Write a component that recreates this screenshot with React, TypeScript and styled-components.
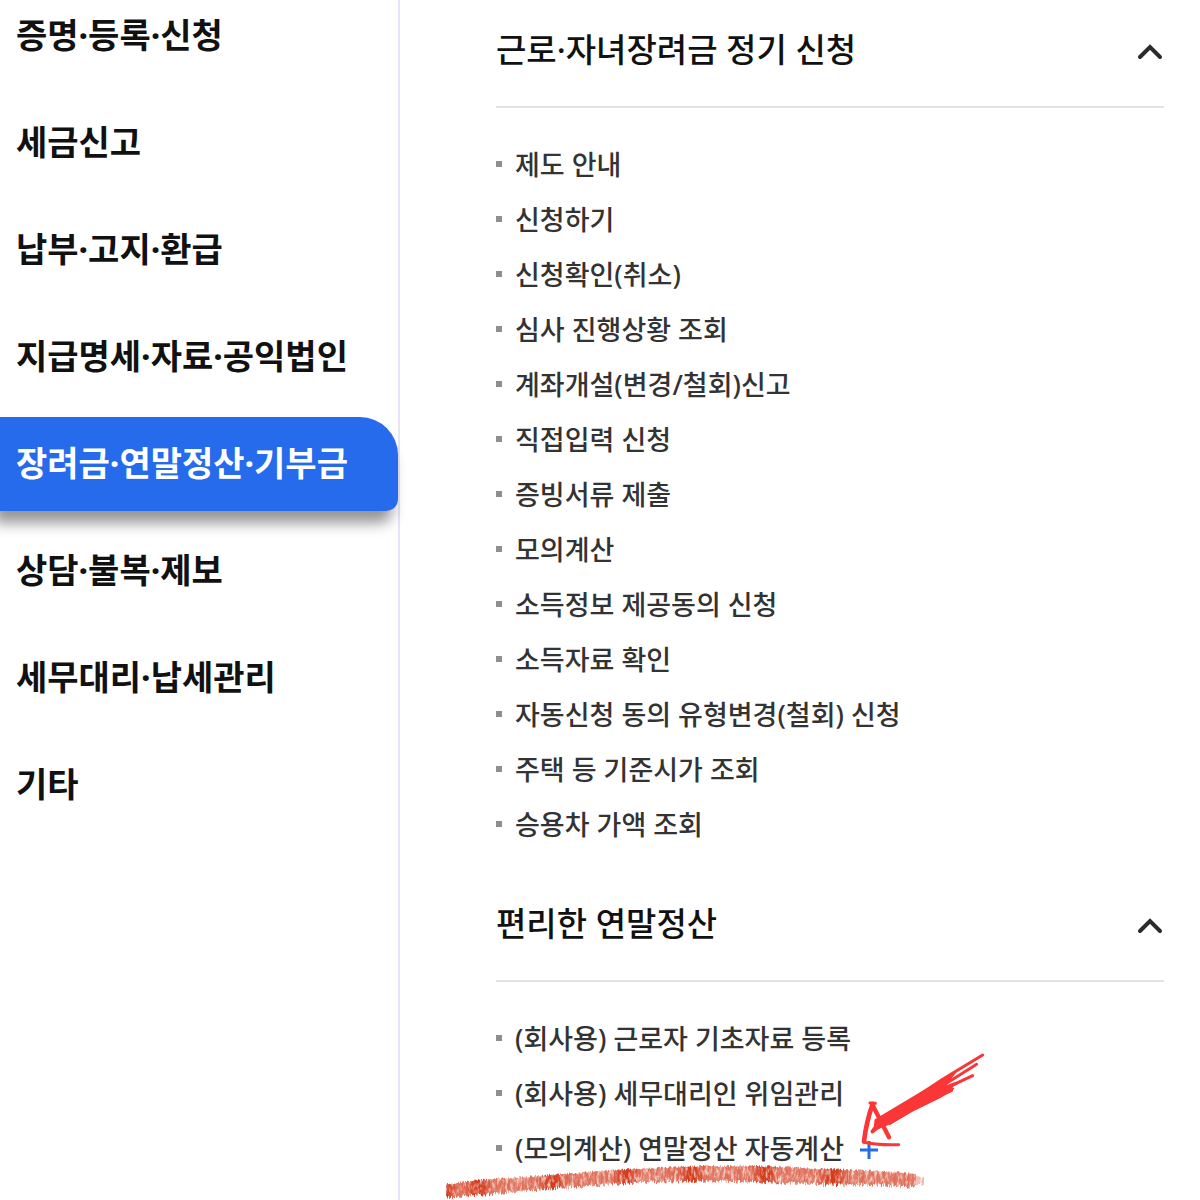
import React, { useState } from "react";
import styled, { createGlobalStyle } from "styled-components";

const GlobalStyle = createGlobalStyle`
  *, *::before, *::after { box-sizing: border-box; }
  body {
    margin: 0;
    background: #fff;
    color: #111;
    font-family: "Noto Sans", "Noto Sans CJK KR", sans-serif;
  }
  ul { margin: 0; padding: 0; list-style: none; }
`;

const Page = styled.div`
  display: grid;
  grid-template-columns: 1fr 2fr;
  min-height: 100vh;
`;

const Sidebar = styled.nav`
  padding-top: 2px;
  border-right: 2px solid #e5e3fd;
`;

const MenuList = styled.ul`
  display: flex;
  flex-direction: column;
  gap: 40px;
`;

const MenuLink = styled.a<{ $active: boolean }>`
  display: block;
  margin: ${(p) => (p.$active ? "-13px 0 -14px" : "0")};
  padding: ${(p) => (p.$active ? "13px 16px 14px" : "0 16px")};
  border-radius: 0 38px 12px 0;
  background: ${(p) => (p.$active ? "#256bec" : "transparent")};
  box-shadow: ${(p) => (p.$active ? "-6px 12px 14px 0 rgba(0, 0, 0, 0.42)" : "none")};
  color: ${(p) => (p.$active ? "#fff" : "#111")};
  font-size: 34px;
  font-weight: 700;
  line-height: 67px;
  white-space: nowrap;
  text-decoration: none;
`;

const Content = styled.main`
  padding: 0 36px 24px 96px;
`;

const Section = styled.section`
  & + & { margin-top: 23px; }
`;

const SectionTitle = styled.h2`
  margin: 0 0 28px;
  border-bottom: 2px solid #e1e1e6;
`;

const Toggle = styled.button`
  display: flex;
  align-items: center;
  justify-content: space-between;
  width: 100%;
  padding: 20px 0 26px;
  border: 0;
  background: none;
  color: #111;
  font-family: inherit;
  font-size: 33px;
  font-weight: 500;
  line-height: 60px;
  text-align: left;
  cursor: pointer;
`;

const Chevron = styled.svg<{ $open: boolean }>`
  width: 28px;
  height: 24px;
  transform: ${(p) => (p.$open ? "none" : "rotate(180deg)")};
`;

const LinkItem = styled.li`
  display: flex;
  align-items: center;
  gap: 13px;
  height: 55px;

  &::before {
    content: "";
    width: 6px;
    height: 6px;
    background: #8e8e8e;
  }
`;

const ItemLink = styled.a`
  padding-top: 3px;
  color: #333;
  font-size: 27px;
  font-weight: 500;
  line-height: 52px;
  white-space: nowrap;
  text-decoration: none;
`;

const Marked = styled.div`
  position: relative;
  display: flex;
  align-items: center;
  gap: 16px;
`;

const ExpandButton = styled.button`
  display: flex;
  padding: 5px 0 0;
  border: 0;
  background: none;
  cursor: pointer;
`;

const Scribble = styled.svg`
  position: absolute;
  left: -75px;
  bottom: -25px;
  width: 560px;
  height: 160px;
  pointer-events: none;
`;

const menu = [
  "증명·등록·신청",
  "세금신고",
  "납부·고지·환급",
  "지급명세·자료·공익법인",
  "장려금·연말정산·기부금",
  "상담·불복·제보",
  "세무대리·납세관리",
  "기타",
];

const sections = [
  {
    title: "근로·자녀장려금 정기 신청",
    items: [
      "제도 안내",
      "신청하기",
      "신청확인(취소)",
      "심사 진행상황 조회",
      "계좌개설(변경/철회)신고",
      "직접입력 신청",
      "증빙서류 제출",
      "모의계산",
      "소득정보 제공동의 신청",
      "소득자료 확인",
      "자동신청 동의 유형변경(철회) 신청",
      "주택 등 기준시가 조회",
      "승용차 가액 조회",
    ],
  },
  {
    title: "편리한 연말정산",
    items: ["(회사용) 근로자 기초자료 등록", "(회사용) 세무대리인 위임관리", "(모의계산) 연말정산 자동계산"],
  },
];

const MARKED_ITEM = "(모의계산) 연말정산 자동계산";

/* Crayon outline: x, top edge, bottom edge */
const crayon = [
  [6, 143, 159], [40, 139, 156], [110, 134, 150], [190, 128, 144], [260, 125, 142],
  [323, 125, 143], [390, 128, 146], [440, 130, 146], [470, 132, 148], [484, 137, 145],
];
const darkSpots = [4, 38, 112, 186, 252, 325, 393];

function noise(n: number) {
  const v = Math.sin(n * 127.1 + 311.7) * 43758.5453;
  return v - Math.floor(v);
}

function edges(x: number) {
  const i = Math.max(1, crayon.findIndex((p) => p[0] >= x));
  const a = crayon[i - 1];
  const b = crayon[i];
  const t = (x - a[0]) / (b[0] - a[0]);
  return [a[1] + (b[1] - a[1]) * t, a[2] + (b[2] - a[2]) * t];
}

const hairs = Array.from({ length: 478 }, (_, i) => {
  const x = 6.5 + i;
  const [top, bottom] = edges(x);
  const near = Math.min(...darkSpots.map((s) => Math.abs(s - x)));
  const y1 = top + noise(i) * 2;
  const y2 = bottom - noise(i + 2000) * 4 + 1;
  const weight = 0.64 + 0.36 * Math.max(0, 1 - near / 16) + noise(i + 5000) * 0.12;
  return { x, y1, y2, weight: x > 476 ? weight * 0.5 : Math.min(1, weight) };
});

function Annotation() {
  return (
    <Scribble viewBox="0 0 560 160" aria-hidden="true">
      <defs>
        <filter id="grain" x="-2%" y="-10%" width="104%" height="120%" colorInterpolationFilters="sRGB">
          <feTurbulence type="fractalNoise" baseFrequency="0.35 0.14" numOctaves="3" seed="4" result="n" />
          <feColorMatrix in="n" type="matrix" values="0 0 0 0 0  0 0 0 0 0  0 0 0 0 0  2 0 0 0 -0.1" result="m" />
          <feComposite in="SourceGraphic" in2="m" operator="in" />
        </filter>
      </defs>
      <g filter="url(#grain)" stroke="#d43c1e">
        {hairs.map((h) => (
          <line key={h.x} x1={h.x} x2={h.x} y1={h.y1} y2={h.y2} strokeOpacity={h.weight} />
        ))}
      </g>
      <g transform="translate(400) scale(0.3333)" fill="none" stroke="#fb3636" strokeLinecap="round" strokeLinejoin="round">
        <path strokeWidth="9" d="M428 45 L308 118 L130 238 M410 73 L310 136 L110 262 M398 107 L290 158 L150 246 M335 151 L240 196 L150 250 M97 276 L130 250" />
        <path fill="#fb3636" strokeWidth="5" d="M345 98 L300 124 L220 172 L106 240 L104 260 L94 274 L122 262 L152 250 L210 216 L300 172 L340 146 L332 142 L362 124 L330 134 L314 140 L325 124 Z" />
        <path strokeWidth="14" d="M98 192 C86 226 76 270 72 304" />
        <path strokeWidth="13" d="M98 196 C112 224 132 262 147 292" />
        <path strokeWidth="9" d="M70 306 C100 314 140 315 176 314 M90 189 L106 190" />
      </g>
    </Scribble>
  );
}

function AccordionSection({ title, items }: { title: string; items: string[] }) {
  const [open, setOpen] = useState(true);
  return (
    <Section>
      <SectionTitle>
        <Toggle type="button" aria-expanded={open} onClick={() => setOpen(!open)}>
          {title}
          <Chevron $open={open} viewBox="0 0 28 24" aria-hidden="true">
            <path d="M4 19 L14 9 L24 19" fill="none" stroke="#2b2b2b" strokeWidth="4" strokeLinecap="round" />
          </Chevron>
        </Toggle>
      </SectionTitle>
      {open && (
        <ul>
          {items.map((item) => (
            <LinkItem key={item}>
              {item === MARKED_ITEM ? (
                <Marked>
                  <ItemLink href="#">{item}</ItemLink>
                  <ExpandButton type="button" aria-label="펼치기">
                    <svg width="18" height="18" viewBox="0 0 18 18" aria-hidden="true">
                      <path d="M9 0 V18 M0 9 H18" stroke="#256bec" strokeWidth="3" />
                    </svg>
                  </ExpandButton>
                  <Annotation />
                </Marked>
              ) : (
                <ItemLink href="#">{item}</ItemLink>
              )}
            </LinkItem>
          ))}
        </ul>
      )}
    </Section>
  );
}

export default function App() {
  return (
    <>
      <GlobalStyle />
      <Page>
        <Sidebar>
          <MenuList>
            {menu.map((label, i) => (
              <li key={label}>
                <MenuLink href="#" $active={i === 4} aria-current={i === 4 ? "page" : undefined}>
                  {label}
                </MenuLink>
              </li>
            ))}
          </MenuList>
        </Sidebar>
        <Content>
          {sections.map((s) => (
            <AccordionSection key={s.title} title={s.title} items={s.items} />
          ))}
        </Content>
      </Page>
    </>
  );
}
